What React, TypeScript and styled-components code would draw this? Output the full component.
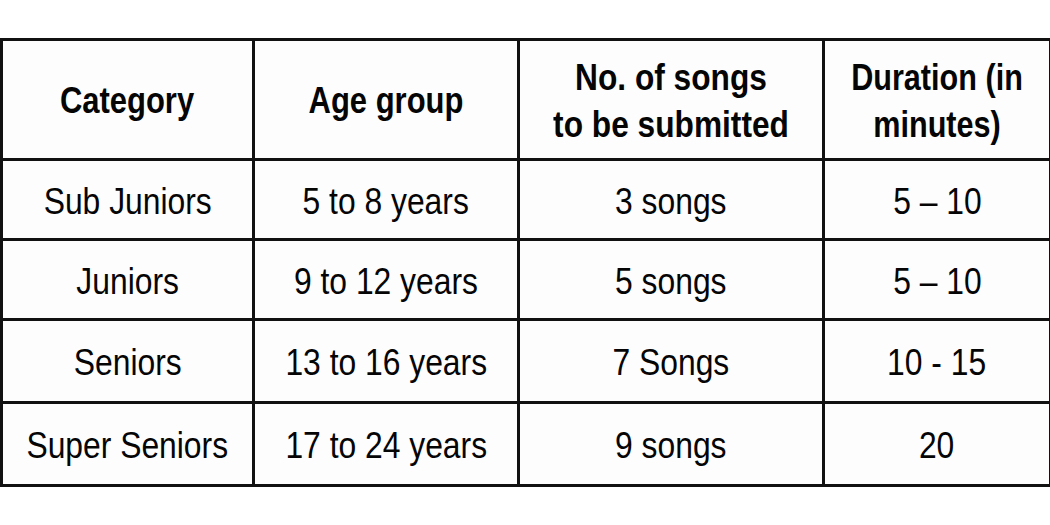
import React from "react";
import styled, { createGlobalStyle } from "styled-components";

const GlobalStyle = createGlobalStyle`
  html, body {
    margin: 0;
    padding: 0;
    background: #ffffff;
  }
  body {
    font-family: "Liberation Sans", Arial, sans-serif;
    color: #050505;
  }
`;

const Page = styled.div`
  width: 1050px;
  height: 525px;
  padding-top: 38px;
  box-sizing: border-box;
  background: #ffffff;
`;

const Table = styled.table`
  width: 1049px;
  border-collapse: collapse;
  table-layout: fixed;
  background: #fdfdfd;
  border: 3px solid #111;
`;

const Row = styled.tr<{ $h: number }>`
  height: ${(p) => p.$h}px;
`;

const HeadCell = styled.th`
  border: 3px solid #111;
  padding: 2px 0 0;
  text-align: center;
  vertical-align: middle;
  font-weight: 700;
  font-size: 36px;
  line-height: 47px;
  white-space: nowrap;
`;

const Cell = styled.td`
  border: 3px solid #111;
  padding: 4px 0 0;
  text-align: center;
  vertical-align: middle;
  font-weight: 400;
  font-size: 37px;
  line-height: 40px;
  white-space: nowrap;
`;

const Narrow = styled.span<{ $sx?: number }>`
  display: inline-block;
  transform: scaleX(${(p) => p.$sx ?? 0.86});
  transform-origin: center;
`;

const rows = [
  { cat: "Sub Juniors", age: "5 to 8 years", songs: "3 songs", dur: "5 – 10", h: 80 },
  { cat: "Juniors", age: "9 to 12 years", songs: "5 songs", dur: "5 – 10", h: 80 },
  { cat: "Seniors", age: "13 to 16 years", songs: "7 Songs", dur: "10 - 15", h: 83 },
  { cat: "Super Seniors", age: "17 to 24 years", songs: "9 songs", dur: "20", h: 83 },
];

const App = () => {
  return (
    <Page>
      <GlobalStyle />
      <Table>
        <colgroup>
          <col style={{ width: 252 }} />
          <col style={{ width: 265 }} />
          <col style={{ width: 305 }} />
          <col style={{ width: 227 }} />
        </colgroup>
        <thead>
          <Row $h={120}>
            <HeadCell>
              <Narrow $sx={0.86}>Category</Narrow>
            </HeadCell>
            <HeadCell>
              <Narrow $sx={0.86}>Age group</Narrow>
            </HeadCell>
            <HeadCell>
              <Narrow $sx={0.88}>
                No. of songs
                <br />
                to be submitted
              </Narrow>
            </HeadCell>
            <HeadCell>
              <Narrow $sx={0.85}>
                Duration (in
                <br />
                minutes)
              </Narrow>
            </HeadCell>
          </Row>
        </thead>
        <tbody>
          {rows.map((r) => (
            <Row key={r.cat} $h={r.h}>
              <Cell>
                <Narrow>{r.cat}</Narrow>
              </Cell>
              <Cell>
                <Narrow>{r.age}</Narrow>
              </Cell>
              <Cell>
                <Narrow>{r.songs}</Narrow>
              </Cell>
              <Cell>
                <Narrow>{r.dur}</Narrow>
              </Cell>
            </Row>
          ))}
        </tbody>
      </Table>
    </Page>
  );
};

export default App;
